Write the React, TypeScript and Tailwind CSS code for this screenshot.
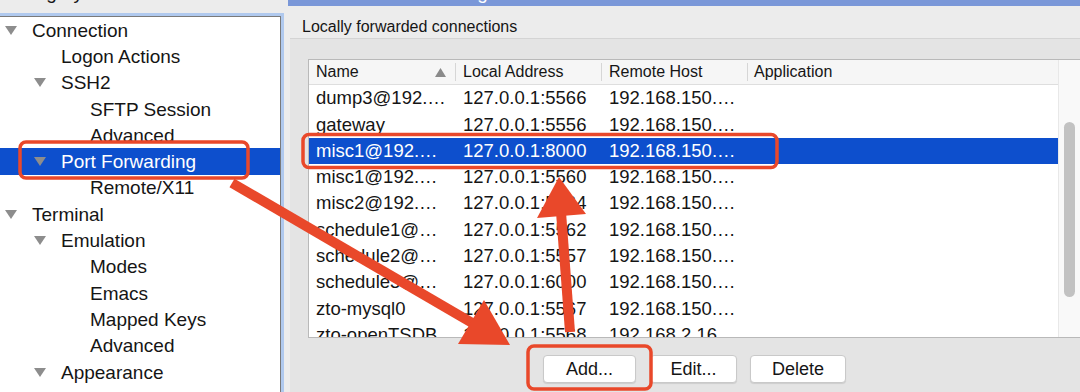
import React from 'react';

type TreeItem = { label: string; level: number; open?: boolean; selected?: boolean };

const tree: TreeItem[] = [
  { label: 'Connection', level: 0, open: true },
  { label: 'Logon Actions', level: 1 },
  { label: 'SSH2', level: 1, open: true },
  { label: 'SFTP Session', level: 2 },
  { label: 'Advanced', level: 2 },
  { label: 'Port Forwarding', level: 1, open: true, selected: true },
  { label: 'Remote/X11', level: 2 },
  { label: 'Terminal', level: 0, open: true },
  { label: 'Emulation', level: 1, open: true },
  { label: 'Modes', level: 2 },
  { label: 'Emacs', level: 2 },
  { label: 'Mapped Keys', level: 2 },
  { label: 'Advanced', level: 2 },
  { label: 'Appearance', level: 1, open: true },
  { label: 'ANSI Color', level: 2 },
];

const indent = ['pl-[5px]', 'pl-[34px]', 'pl-[63px]'];

const rows = [
  ['dump3@192.…', '127.0.0.1:5566', '192.168.150.…'],
  ['gateway', '127.0.0.1:5556', '192.168.150.…'],
  ['misc1@192.…', '127.0.0.1:8000', '192.168.150.…'],
  ['misc1@192.…', '127.0.0.1:5560', '192.168.150.…'],
  ['misc2@192.…', '127.0.0.1:5564', '192.168.150.…'],
  ['schedule1@…', '127.0.0.1:5562', '192.168.150.…'],
  ['schedule2@…', '127.0.0.1:5557', '192.168.150.…'],
  ['schedule3@…', '127.0.0.1:6000', '192.168.150.…'],
  ['zto-mysql0', '127.0.0.1:5567', '192.168.150.…'],
  ['zto-openTSDB', '127.0.0.1:5568', '192.168.2.16'],
];

function Disclosure() {
  return (
    <svg width="12" height="9" viewBox="0 0 12 9" className="shrink-0">
      <polygon points="0,0 12,0 6,9" fill="#8d8d8d" />
    </svg>
  );
}

function Button({ label, width }: { label: string; width: string }) {
  return (
    <div
      className={`${width} h-[28px] bg-white border border-[#c9c9c9] rounded-[4px] shadow-[0_1px_1px_rgba(0,0,0,0.1)] flex items-center justify-center text-[18px]`}
    >
      {label}
    </div>
  );
}

// red markup drawn over the screenshot
function Annotations() {
  const red = '#e9482a';
  return (
    <svg className="absolute inset-0 pointer-events-none" width="1080" height="392" viewBox="0 0 1080 392">
      <rect x="20" y="142" width="228" height="36" rx="6" fill="none" stroke={red} strokeWidth="3.5" />
      <rect x="303" y="134.5" width="474" height="33" rx="6" fill="none" stroke={red} strokeWidth="3.5" />
      <rect x="528" y="346" width="123" height="43" rx="6" fill="none" stroke={red} strokeWidth="3.5" />
      <line x1="232" y1="183" x2="474" y2="324" stroke={red} strokeWidth="10" />
      <polygon points="458,344 484,300 510,345" fill={red} />
      <line x1="570" y1="332" x2="561" y2="212" stroke={red} strokeWidth="10" />
      <polygon points="537,218 559,177 586,214" fill={red} />
    </svg>
  );
}

export default function App() {
  return (
    <div className="relative w-[1080px] h-[392px] overflow-hidden bg-[#ececec] font-['Liberation_Sans',Arial,sans-serif] text-[#151515]">
      <div className="flex h-full">
        <div className="w-[288px] shrink-0 flex flex-col">
          <div className="h-[16px] shrink-0 overflow-hidden pl-[6px]">
            <div className="-mt-[17px] text-[19px] leading-[19px]">Category:</div>
          </div>
          <div className="w-[281px] flex-1 min-h-0 overflow-hidden bg-white border-t border-r border-[#7a7a7a] shadow-[0_0_0_3px_#b0c9ee]">
            {tree.map((item, i) => (
              <div
                key={i}
                className={`h-[26.3px] flex items-center ${indent[item.level]} ${
                  item.selected ? 'bg-[#0d4fcd] text-white' : ''
                }`}
              >
                <div className="w-[27px] shrink-0 flex items-center">{item.open && <Disclosure />}</div>
                <span className="text-[19px] leading-none whitespace-nowrap">{item.label}</span>
              </div>
            ))}
          </div>
        </div>

        <div className="flex-1 flex flex-col">
          <div className="h-[6px] shrink-0 bg-[#7a97d8] overflow-hidden pl-[14px]">
            <div className="-mt-[17px] text-[19px] leading-[19px] text-white">Local Port Forwarding</div>
          </div>
          <div className="h-[32px] shrink-0 pl-[14px] pt-[12px] text-[16px] leading-[18px]">
            Locally forwarded connections
          </div>
          <div className="flex-1 ml-[2px] border-t border-[#d4d4d4] bg-[#e4e4e4] pt-[20px] pl-[18px] flex flex-col">
            <div className="h-[279px] shrink-0 flex bg-white border-t border-l border-b border-[#b9b9b9]">
              <div className="flex-1 flex flex-col overflow-hidden">
                <div className="h-[25px] shrink-0 flex bg-[#f6f6f6] border-b border-[#dedede] text-[16px]">
                  <div className="w-[147px] flex items-center pl-[7px]">
                    <span>Name</span>
                    <svg width="11" height="9" viewBox="0 0 11 9" className="ml-auto mr-[9px]">
                      <polygon points="0,9 11,9 5.5,0" fill="#8a8a8a" />
                    </svg>
                    <div className="w-px h-[18px] bg-[#d6d6d6]" />
                  </div>
                  <div className="w-[146px] flex items-center pl-[7px]">
                    <span className="flex-1">Local Address</span>
                    <div className="w-px h-[18px] bg-[#d6d6d6]" />
                  </div>
                  <div className="w-[146px] flex items-center pl-[7px]">
                    <span className="flex-1">Remote Host</span>
                    <div className="w-px h-[18px] bg-[#d6d6d6]" />
                  </div>
                  <div className="flex-1 flex items-center pl-[6px]">Application</div>
                </div>
                {rows.map((r, i) => (
                  <div
                    key={i}
                    className={`h-[26.3px] shrink-0 flex items-center text-[18.5px] whitespace-nowrap ${
                      i === 2 ? 'bg-[#0d4fcd] text-white' : ''
                    }`}
                  >
                    <div className="w-[147px] pl-[7px] overflow-hidden">{r[0]}</div>
                    <div className="w-[146px] pl-[7px] overflow-hidden">{r[1]}</div>
                    <div className="w-[146px] pl-[7px] overflow-hidden">{r[2]}</div>
                    <div className="flex-1" />
                  </div>
                ))}
              </div>
              <div className="w-[22px] shrink-0 bg-[#f9f9f9] border-l border-[#e8e8e8] pt-[62px] pl-[5px]">
                <div className="w-[11px] h-[175px] rounded-full bg-[#c2c2c2]" />
              </div>
            </div>
            <div className="flex mt-[17px] pl-[235px]">
              <Button label="Add..." width="w-[93px]" />
              <div className="ml-[14px]">
                <Button label="Edit..." width="w-[87px]" />
              </div>
              <div className="ml-[13px]">
                <Button label="Delete" width="w-[96px]" />
              </div>
            </div>
          </div>
        </div>
      </div>
      <Annotations />
    </div>
  );
}
